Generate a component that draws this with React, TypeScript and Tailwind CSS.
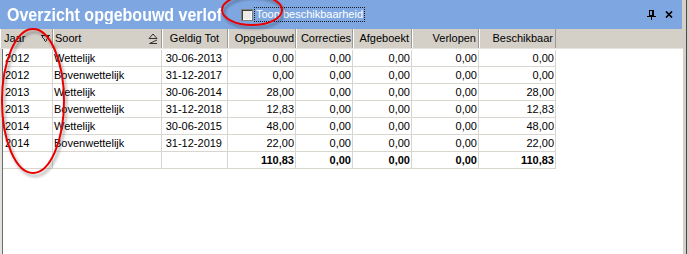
import React from "react";

// Kolommen: header-breedte, body-breedte, uitlijning
const columns = [
  { label: "Jaar", head: "w-[53px] justify-between pl-[4px] pr-[2px]", body: "w-[50px] justify-start pl-[2px]", icon: "filter" },
  { label: "Soort", head: "w-[109px] justify-between pl-[2px] pr-[3px]", body: "w-[109px] justify-start pl-[1px]", icon: "sort" },
  { label: "Geldig Tot", head: "w-[66px] justify-center", body: "w-[66px] justify-end pr-[5px]" },
  { label: "Opgebouwd", head: "w-[68px] justify-end pr-[1px]", body: "w-[68px] justify-end pr-[1px]" },
  { label: "Correcties", head: "w-[57px] justify-end pr-[1px]", body: "w-[57px] justify-end pr-[1px]" },
  { label: "Afgeboekt", head: "w-[59px] justify-end pr-[2px]", body: "w-[59px] justify-end pr-[1px]" },
  { label: "Verlopen", head: "w-[67px] justify-end pr-[2px]", body: "w-[67px] justify-end pr-[1px]" },
  { label: "Beschikbaar", head: "w-[77px] justify-end pr-[2px]", body: "w-[77px] justify-end pr-[1px]" },
];

const rows = [
  ["2012", "Wettelijk", "30-06-2013", "0,00", "0,00", "0,00", "0,00", "0,00"],
  ["2012", "Bovenwettelijk", "31-12-2017", "0,00", "0,00", "0,00", "0,00", "0,00"],
  ["2013", "Wettelijk", "30-06-2014", "28,00", "0,00", "0,00", "0,00", "28,00"],
  ["2013", "Bovenwettelijk", "31-12-2018", "12,83", "0,00", "0,00", "0,00", "12,83"],
  ["2014", "Wettelijk", "30-06-2015", "48,00", "0,00", "0,00", "0,00", "48,00"],
  ["2014", "Bovenwettelijk", "31-12-2019", "22,00", "0,00", "0,00", "0,00", "22,00"],
];

const totals = ["", "", "", "110,83", "0,00", "0,00", "0,00", "110,83"];

function FilterIcon() {
  return (
    <svg width="9" height="8" viewBox="0 0 9 8" shapeRendering="crispEdges">
      <path d="M0.5 0.5 H8.5 L4.5 6.5 Z" fill="none" stroke="#333" />
      <path d="M0 0.5 H9" stroke="#222" />
    </svg>
  );
}

function SortIcon() {
  return (
    <svg width="10" height="12" viewBox="0 0 10 12">
      <path d="M1 5.5 L5 1 L9 5.5 Z" fill="none" stroke="#333" />
      <path d="M9 7 L1.5 10.5 L9 10.5" fill="none" stroke="#333" />
    </svg>
  );
}

function PinIcon() {
  return (
    <svg width="9" height="10" viewBox="0 0 9 10" shapeRendering="crispEdges">
      <rect x="2.5" y="0.5" width="4" height="5" fill="none" stroke="#000" />
      <path d="M5.5 0 V6" stroke="#000" />
      <path d="M0 6.5 H9" stroke="#000" />
      <path d="M4.5 7 V10" stroke="#000" />
    </svg>
  );
}

function CloseIcon() {
  return (
    <svg width="8" height="7" viewBox="0 0 8 7">
      <path d="M1 0.5 L7 6.5 M7 0.5 L1 6.5" stroke="#000" strokeWidth="1.7" />
    </svg>
  );
}

export default function App() {
  return (
    <div className="relative w-[689px] h-[254px] overflow-hidden flex bg-[#d4d0c8] font-['Liberation_Sans',Arial,sans-serif] text-[11px] text-black">
      <div className="w-[683px] h-full flex flex-col">
        {/* Titelbalk */}
        <div className="h-[29px] w-[682px] shrink-0 flex items-center bg-[#7ea7e1] pl-[7px] pr-[9px]">
          <span className="w-[234px] text-[16px] font-bold text-white leading-none whitespace-nowrap origin-left scale-y-[1.12]">
            Overzicht opgebouwd verlof
          </span>
          <div className="w-[12px] h-[12px] border border-[#7f7d78] bg-[#eceae6] shadow-[inset_1px_1px_0_#404040,inset_-1px_-1px_0_#ffffff]" />
          <span className="ml-[1px] h-[15px] flex items-center px-[1px] border border-dotted border-[#1a1a1a] text-white leading-none">
            Toon beschikbaarheid
          </span>
          <div className="ml-auto flex items-center gap-[9px]">
            <PinIcon />
            <CloseIcon />
          </div>
        </div>

        {/* Kolomkoppen */}
        <div className="h-[20px] shrink-0 flex bg-[#d4d0c8] border-b border-[#e6e4de]">
          {columns.map((c) => (
            <div
              key={c.label}
              className={`${c.head} h-full flex items-center border-r border-[#9d9a93] shadow-[inset_1px_0_0_#ffffff] whitespace-nowrap`}
            >
              <span>{c.label}</span>
              {c.icon === "filter" && <FilterIcon />}
              {c.icon === "sort" && <SortIcon />}
            </div>
          ))}
        </div>

        {/* Gegevens */}
        <div className="flex-1 flex bg-white border-l-2 border-[#e4e2dc]">
          <div className="flex-1 flex flex-col border-l border-[#6c6c6c]">
            {rows.map((r, i) => (
              <div
                key={i}
                className={`flex border-b border-[#d9d6cf] w-[553px] ${i === 0 ? "h-[18px] pt-[1px]" : "h-[17px]"}`}
              >
                {r.map((v, j) => (
                  <div
                    key={j}
                    className={`${columns[j].body} flex items-center h-full border-r border-[#d9d6cf] whitespace-nowrap`}
                  >
                    {v}
                  </div>
                ))}
              </div>
            ))}
            <div className="flex h-[17px] border-b border-[#d9d6cf] w-[553px] font-bold">
              {totals.map((v, j) => (
                <div
                  key={j}
                  className={`${columns[j].body} flex items-center h-full border-r border-[#d9d6cf] whitespace-nowrap`}
                >
                  {v}
                </div>
              ))}
            </div>
          </div>
        </div>
      </div>

      {/* Rechterrand */}
      <div className="w-[6px] h-full flex">
        <div className="w-[3px] bg-[#d4d0c8]" />
        <div className="w-[1px] bg-[#4a4a4a]" />
        <div className="w-[2px] bg-[#d4d0c8]" />
      </div>

      {/* Rode markeringen */}
      <svg className="absolute left-0 top-0 pointer-events-none" width="689" height="254" viewBox="0 0 689 254">
        <defs>
          <filter id="schaduw" x="-20%" y="-20%" width="140%" height="140%">
            <feDropShadow dx="2" dy="3" stdDeviation="1.6" floodColor="#000" floodOpacity="0.35" />
          </filter>
        </defs>
        <ellipse cx="252" cy="10" rx="30" ry="15" fill="none" stroke="#e80000" strokeWidth="2" filter="url(#schaduw)" />
        <ellipse cx="33" cy="101" rx="31" ry="72" fill="none" stroke="#e80000" strokeWidth="2" filter="url(#schaduw)" />
      </svg>
    </div>
  );
}
